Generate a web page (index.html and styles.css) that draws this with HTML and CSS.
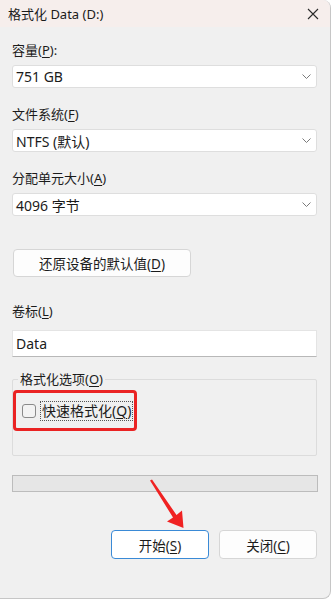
FILE: index.html
```html
<!DOCTYPE html>
<html lang="zh-CN">
<head>
    <meta charset="UTF-8">
    <meta name="viewport" content="width=device-width, initial-scale=1.0">
    <title>格式化 Data (D:)</title>
    <link rel="stylesheet" href="styles.css">
</head>
<body>
    <div class="window">
        <div class="titlebar">
            <span class="title">格式化 Data (D:)</span>
            <svg class="close" width="12" height="12" viewBox="0 0 12 12">
                <path d="M1 1 L11 11 M11 1 L1 11" stroke="#2b2b2b" stroke-width="1.1" fill="none"/>
            </svg>
        </div>

        <div class="content">
            <div class="field">
                <div class="label">容量(<u>P</u>):</div>
                <div class="select">
                    <span>751 GB</span>
                    <svg class="chevron" width="9" height="5" viewBox="0 0 9 5"><polyline points="0.5,0.5 4.5,4.5 8.5,0.5" fill="none" stroke="#7a7a7a" stroke-width="1"/></svg>
                </div>
            </div>

            <div class="field">
                <div class="label">文件系统(<u>F</u>)</div>
                <div class="select">
                    <span>NTFS (默认)</span>
                    <svg class="chevron" width="9" height="5" viewBox="0 0 9 5"><polyline points="0.5,0.5 4.5,4.5 8.5,0.5" fill="none" stroke="#7a7a7a" stroke-width="1"/></svg>
                </div>
            </div>

            <div class="field">
                <div class="label">分配单元大小(<u>A</u>)</div>
                <div class="select">
                    <span>4096 字节</span>
                    <svg class="chevron" width="9" height="5" viewBox="0 0 9 5"><polyline points="0.5,0.5 4.5,4.5 8.5,0.5" fill="none" stroke="#7a7a7a" stroke-width="1"/></svg>
                </div>
            </div>

            <button class="btn restore">还原设备的默认值(<u>D</u>)</button>

            <div class="field volume">
                <div class="label">卷标(<u>L</u>)</div>
                <div class="textbox">Data</div>
            </div>

            <div class="group">
                <div class="group-title">格式化选项(<u>O</u>)</div>
                <div class="quick">
                    <span class="checkbox"></span>
                    <span class="check-label">快速格式化(<u>Q</u>)</span>
                </div>
            </div>

            <div class="progress"></div>

            <div class="actions">
                <button class="btn primary">开始(<u>S</u>)</button>
                <button class="btn">关闭(<u>C</u>)</button>
            </div>
        </div>

        <svg class="arrow" width="335" height="600" viewBox="0 0 335 600">
            <polygon points="150,480.5 152,479.5 176.5,515 182,510.5 183.5,528 167,521.5 173,517.5" fill="#f02222"/>
        </svg>
    </div>
</body>
</html>
```

FILE: styles.css
```css
* {
    margin: 0;
    padding: 0;
    box-sizing: border-box;
}

body {
    background: #ffffff;
    font-family: "Noto Sans", "Noto Sans CJK SC", sans-serif;
    font-size: 13px;
    color: #1b1b1b;
}

.window {
    position: relative;
    width: 331px;
    height: 599px;
    background: #f0f0f0;
    border-right: 1px solid #c6c6c6;
    border-bottom: 1px solid #c6c6c6;
    border-radius: 0 8px 8px 0;
    overflow: hidden;
}

.titlebar {
    height: 27px;
    background: #f6eeec;
    display: flex;
    align-items: center;
    justify-content: space-between;
    padding: 0 11px 0 8px;
}

.title {
    font-size: 13px;
    line-height: 18px;
}

.content {
    padding: 14px 12px 0 12px;
}

.field + .field {
    margin-top: 17px;
}

.label {
    line-height: 18px;
    margin-bottom: 6px;
}

u {
    text-decoration-thickness: 1px;
    text-underline-offset: 2px;
}

.select {
    height: 23px;
    width: 305px;
    background: #ffffff;
    border: 1px solid #dedede;
    border-radius: 3px;
    display: flex;
    align-items: center;
    justify-content: space-between;
    padding: 0 5px 0 3px;
    font-size: 14px;
}

.btn {
    font-family: inherit;
    font-size: 13.5px;
    color: #1b1b1b;
    background: #fdfdfd;
    border: 1px solid #d6d6d6;
    border-radius: 4px;
    height: 29px;
    width: 98px;
}

.restore {
    display: block;
    margin-top: 33px;
    margin-left: 1px;
    width: 178px;
    height: 28px;
}

.field.volume {
    margin-top: 25px;
}

.volume .label {
    margin-bottom: 10px;
}

.textbox {
    height: 27px;
    width: 305px;
    background: #ffffff;
    border: 1px solid #e4e4e4;
    border-bottom: 1px solid #b8b8b8;
    display: flex;
    align-items: center;
    padding-left: 3px;
    font-size: 14px;
}

.group {
    margin-top: 22px;
    width: 305px;
    border: 1px solid #dcdcdc;
    border-radius: 2px;
    padding-bottom: 24px;
}

.group-title {
    width: fit-content;
    height: 18px;
    margin: -10px 0 0 5px;
    padding: 0 2px;
    line-height: 18px;
    background: #f0f0f0;
}

.quick {
    margin-top: 2px;
    width: 124px;
    height: 41px;
    border: 3px solid #ea2323;
    border-radius: 4px;
    display: flex;
    align-items: center;
    padding-left: 6px;
}

.checkbox {
    width: 14px;
    height: 14px;
    border: 1px solid #8a8a8a;
    border-radius: 3px;
    background: #f3f3f3;
}

.check-label {
    margin-left: 4px;
    height: 20px;
    padding: 0 1px;
    border: 1px dotted #555;
    line-height: 18px;
    font-size: 14px;
}

.progress {
    margin-top: 19px;
    width: 306px;
    height: 17px;
    background: #e6e6e6;
    border: 1px solid #bcbcbc;
}

.actions {
    margin-top: 38px;
    width: 305px;
    display: flex;
    justify-content: flex-end;
    gap: 10px;
}

.primary {
    border: 1px solid #3a8ad6;
    background: #ffffff;
}

.arrow {
    position: absolute;
    left: 0;
    top: 0;
    pointer-events: none;
}
```
